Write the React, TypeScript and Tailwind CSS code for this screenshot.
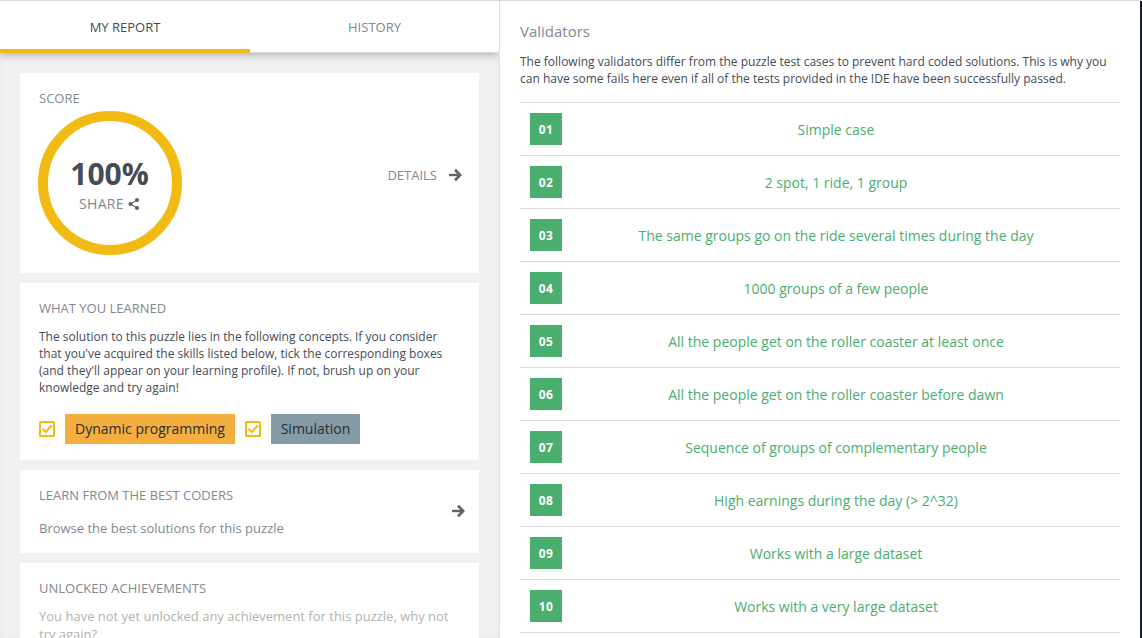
import React from "react";

const validators: string[] = [
  "Simple case",
  "2 spot, 1 ride, 1 group",
  "The same groups go on the ride several times during the day",
  "1000 groups of a few people",
  "All the people get on the roller coaster at least once",
  "All the people get on the roller coaster before dawn",
  "Sequence of groups of complementary people",
  "High earnings during the day (> 2^32)",
  "Works with a large dataset",
  "Works with a very large dataset",
];

function ArrowIcon() {
  return (
    <svg width="14" height="14" viewBox="0 0 14 14" fill="none" stroke="#5f666b" className="shrink-0">
      <path d="M1 7H12" strokeWidth="2.4" />
      <path d="M7 1.8L12.2 7L7 12.2" strokeWidth="2.7" />
    </svg>
  );
}

function ShareIcon() {
  return (
    <svg width="12" height="12" viewBox="0 0 12 12" className="shrink-0">
      <path d="M9 2L2.6 6L9 10" fill="none" stroke="#5c6267" strokeWidth="1.1" />
      <circle cx="2.4" cy="6" r="2" fill="#5c6267" />
      <circle cx="9" cy="2.1" r="2" fill="#5c6267" />
      <circle cx="9" cy="9.9" r="2" fill="#5c6267" />
    </svg>
  );
}

function Checkbox() {
  return (
    <svg width="16" height="16" viewBox="0 0 16 16" fill="none" stroke="#f2bb13" className="shrink-0">
      <rect x="1" y="1" width="14" height="14" rx="0.6" strokeWidth="2" />
      <path d="M3.4 7.8L6.8 11L12.7 4.6" strokeWidth="2.2" />
    </svg>
  );
}

function Heading({ children }: { children: React.ReactNode }) {
  return <h2 className="text-[13px] leading-[18px] text-[#838891]">{children}</h2>;
}

function Score() {
  return (
    <section className="flex h-[200px] shrink-0 bg-white pt-4 pl-[19px] pr-[17px]">
      <div className="flex-1">
        <Heading>SCORE</Heading>
        <div className="mt-[3px] -ml-[2px] flex h-[145px] w-[145px] items-center justify-center">
          <div className="flex h-[144px] w-[144px] shrink-0 flex-col items-center rounded-full border-[10px] border-[#f2bb13] pt-[35px]">
            <div className="text-[30px] leading-[36px] font-bold text-[#454c55]">100%</div>
            <div className="mt-[3px] flex items-center gap-[4px] text-sm leading-[18px] tracking-[0.3px] text-[#838891]">
              SHARE
              <ShareIcon />
            </div>
          </div>
        </div>
      </div>
      <div className="mt-[77px] flex h-[18px] items-center gap-[11px] text-[13px] text-[#838891]">
        <span className="pt-[2px]">DETAILS</span>
        <ArrowIcon />
      </div>
    </section>
  );
}

function Learned() {
  return (
    <section className="h-[177px] shrink-0 bg-white px-[19px] pt-4">
      <Heading>WHAT YOU LEARNED</Heading>
      <p className="mt-[11px] text-xs leading-[17px] whitespace-nowrap text-[#454c55]">
        The solution to this puzzle lies in the following concepts. If you consider
        <br />
        that you've acquired the skills listed below, tick the corresponding boxes
        <br />
        (and they'll appear on your learning profile). If not, brush up on your
        <br />
        knowledge and try again!
      </p>
      <div className="mt-[18px] flex items-center gap-[10px] text-sm text-[#252e38]">
        <Checkbox />
        <div className="flex h-[30px] w-[170px] items-center justify-center bg-[#f4ae3d]">Dynamic programming</div>
        <Checkbox />
        <div className="flex h-[30px] w-[89px] items-center justify-center bg-[#859ba5]">Simulation</div>
      </div>
    </section>
  );
}

export default function App() {
  return (
    <div className="flex h-[638px] w-[1142px] overflow-hidden border-t border-[#dadada] bg-white font-['Open_Sans',sans-serif]">
      <aside className="flex w-[500px] shrink-0 flex-col overflow-hidden border-r border-[#e1e1e1] bg-[#f1f1f1]">
        <nav className="relative z-10 flex h-[52px] shrink-0 bg-white text-[13px] shadow-[0_1px_9px_rgba(0,0,0,0.3)]">
          <div className="flex w-[250px] items-center justify-center border-b-4 border-[#f2bb13] pt-[6px] text-[#454c55]">MY REPORT</div>
          <div className="flex flex-1 items-center justify-center border-b border-[#d7dada] pt-[3px] text-[#838891]">HISTORY</div>
        </nav>
        <main className="flex min-h-0 flex-1 flex-col gap-[10px] overflow-hidden px-5 pt-5 shadow-[inset_0_0_8px_rgba(0,0,0,0.03)]">
          <Score />
          <Learned />
          <section className="flex h-[83px] shrink-0 items-center bg-white pr-[14px] pl-[19px]">
            <div className="flex-1">
              <Heading>LEARN FROM THE BEST CODERS</Heading>
              <p className="mt-[15px] text-[13px] leading-[18px] text-[#838891]">Browse the best solutions for this puzzle</p>
            </div>
            <div className="pb-px">
              <ArrowIcon />
            </div>
          </section>
          <section className="h-[100px] shrink-0 bg-white px-[19px] pt-4">
            <Heading>UNLOCKED ACHIEVEMENTS</Heading>
            <p className="mt-[10px] text-[13px] leading-[18px] whitespace-nowrap text-[#b3b3ad]">
              You have not yet unlocked any achievement for this puzzle, why not
              <br />
              try again?
            </p>
          </section>
        </main>
      </aside>
      <section className="w-[640px] shrink-0 px-5 pt-5">
        <h1 className="text-[15px] leading-[21px] text-[#838891]">Validators</h1>
        <p className="mt-[11px] mb-[15px] text-xs leading-[17px] whitespace-nowrap text-[#454c55]">
          The following validators differ from the puzzle test cases to prevent hard coded solutions. This is why you
          <br />
          can have some fails here even if all of the tests provided in the IDE have been successfully passed.
        </p>
        <ul className="border-t border-[#d8dada]">
          {validators.map((name, i) => (
            <li key={name} className="flex h-[53px] items-center border-b border-[#d8dada] px-[10px]">
              <span className="flex h-8 w-8 items-center justify-center bg-[#4aae6f] pt-[2px] text-xs font-bold tracking-[0.3px] text-white">
                {String(i + 1).padStart(2, "0")}
              </span>
              <span className="flex-1 pt-[2px] text-center text-sm text-[#4aae6f]">{name}</span>
            </li>
          ))}
        </ul>
      </section>
      <div className="w-[2px] shrink-0 bg-[#17202b]" />
    </div>
  );
}
